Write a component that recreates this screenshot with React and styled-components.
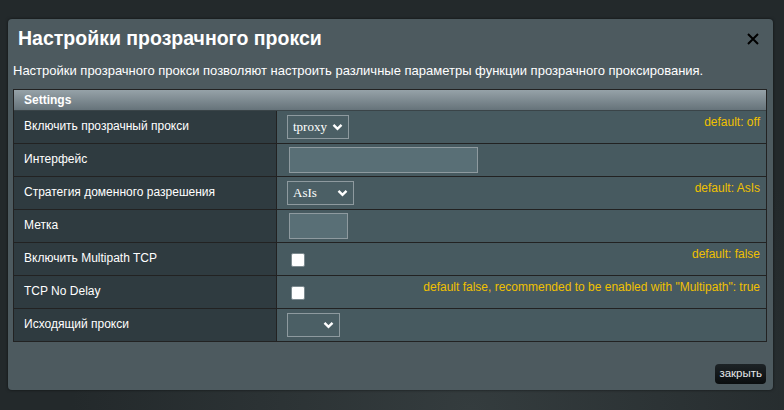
import React from "react";
import styled, { createGlobalStyle } from "styled-components";

const GlobalStyle = createGlobalStyle`
	html, body {
		margin: 0;
		padding: 0;
		width: 784px;
		height: 410px;
		overflow: hidden;
		background: #23292b;
		font-family: "Liberation Sans", Arial, sans-serif;
	}
`;

const rows = [
	{ label: "Включить прозрачный прокси", kind: "select", value: "tproxy", w: 62, hint: "default: off" },
	{ label: "Интерфейс", kind: "input", w: 189 },
	{ label: "Стратегия доменного разрешения", kind: "select", value: "AsIs", w: 67, hint: "default: AsIs" },
	{ label: "Метка", kind: "input", w: 59 },
	{ label: "Включить Multipath TCP", kind: "check", hint: "default: false" },
	{ label: "TCP No Delay", kind: "check", hint: 'default false, recommended to be enabled with "Multipath": true' },
	{ label: "Исходящий прокси", kind: "select", value: "", w: 53 },
];

export default function App() {
	return (
		<>
			<GlobalStyle />
			<Backdrop>
				<Modal>
					<TitleBar>
						<Title>Настройки прозрачного прокси</Title>
						<Close>
							<svg width="12" height="12" viewBox="0 0 12 12">
								<path d="M1 1L11 11M11 1L1 11" stroke="#000" strokeWidth="2" />
							</svg>
						</Close>
					</TitleBar>
					<Description>
						Настройки прозрачного прокси позволяют настроить различные параметры функции прозрачного проксирования.
					</Description>
					<Table>
						<HeaderRow>Settings</HeaderRow>
						{rows.map((r, i) => (
							<Row key={i}>
								<Label>{r.label}</Label>
								<Value>
									{r.kind === "select" && (
										<Select style={{ width: `${r.w}px` }}>
											<span>{r.value}</span>
											<svg width="11" height="8" viewBox="0 0 11 8">
												<path d="M1.5 1.8L5.5 5.8L9.5 1.8" stroke="#fff" strokeWidth="2.4" fill="none" />
											</svg>
										</Select>
									)}
									{r.kind === "input" && <Input style={{ width: `${r.w}px` }} />}
									{r.kind === "check" && <Check />}
									{r.hint && <Hint>{r.hint}</Hint>}
								</Value>
							</Row>
						))}
					</Table>
					<Footer>
						<CloseButton>закрыть</CloseButton>
					</Footer>
				</Modal>
			</Backdrop>
		</>
	);
}

const Backdrop = styled.div`
	width: 784px;
	height: 410px;
	padding: 19px 11px 20px 8px;
	box-sizing: border-box;
	background: radial-gradient(ellipse at 60% 100%, #343c3e 0%, #23292b 60%), #23292b;
`;

const Modal = styled.div`
	width: 765px;
	height: 371px;
	box-sizing: border-box;
	background: #4d5a5f;
	border-radius: 4px;
	box-shadow: 0 0 3px rgba(0, 0, 0, 0.6);
	padding: 0 6px 0 5px;
	display: flex;
	flex-direction: column;
`;

const TitleBar = styled.div`
	display: flex;
	align-items: center;
	justify-content: space-between;
	height: 38px;
	padding: 0 8px 0 5px;
`;

const Title = styled.div`
	font-size: 19.5px;
	font-weight: bold;
	color: #fff;
`;

const Close = styled.div`
	width: 12px;
	height: 12px;
	display: flex;
	margin-top: 1px;
`;

const Description = styled.div`
	font-size: 13px;
	color: #fff;
	margin-top: 6px;
	height: 26px;
`;

const Table = styled.div`
	border: 1px solid #222;
	width: 754px;
	box-sizing: border-box;
`;

const HeaderRow = styled.div`
	height: 20px;
	line-height: 20px;
	padding-left: 10px;
	font-size: 12px;
	font-weight: bold;
	color: #fff;
	background: linear-gradient(#96a2a8, #66737a);
	border-bottom: 1px solid #3a4448;
`;

const Row = styled.div`
	display: grid;
	grid-template-columns: 263px 1fr;
	height: 33px;
	border-top: 1px solid #222;
	box-sizing: border-box;
	&:nth-child(2) {
		border-top: none;
		height: 32px;
	}
`;

const Label = styled.div`
	background: #2f3b40;
	border-right: 1px solid #222;
	color: #fff;
	font-size: 12px;
	padding-left: 10px;
	display: flex;
	align-items: center;
	padding-bottom: 2px;
`;

const Value = styled.div`
	background: #475a60;
	position: relative;
	display: flex;
	align-items: center;
	padding-left: 10px;
`;

const Select = styled.div`
	height: 24px;
	box-sizing: border-box;
	border: 1px solid #8e9a9f;
	background: #4b5f65;
	display: flex;
	align-items: center;
	justify-content: space-between;
	padding: 0 5px 1px 5px;
	font-family: "Liberation Serif", serif;
	font-size: 13px;
	color: #fff;
	svg {
		margin-top: 1px;
	}
`;

const Input = styled.div`
	height: 26px;
	box-sizing: border-box;
	margin-left: 2px;
	border: 1px solid #8e9a9f;
	background: #596f76;
`;

const Check = styled.div`
	width: 12px;
	height: 12px;
	margin-left: 4px;
	margin-top: 2px;
	background: #fff;
	border: 1px solid #7c8a8f;
	border-radius: 2px;
`;

const Hint = styled.div`
	position: absolute;
	top: 4px;
	right: 6px;
	font-size: 12px;
	color: #f0c000;
`;

const Footer = styled.div`
	flex: 1;
	display: flex;
	justify-content: flex-end;
	align-items: flex-end;
	padding: 0 1px 6px 0;
`;

const CloseButton = styled.div`
	height: 20px;
	line-height: 19px;
	padding: 0 4px;
	font-size: 11.5px;
	color: #e6e8e9;
	border-radius: 4px;
	background: linear-gradient(#1d2326, #0a0d0e);
`;
